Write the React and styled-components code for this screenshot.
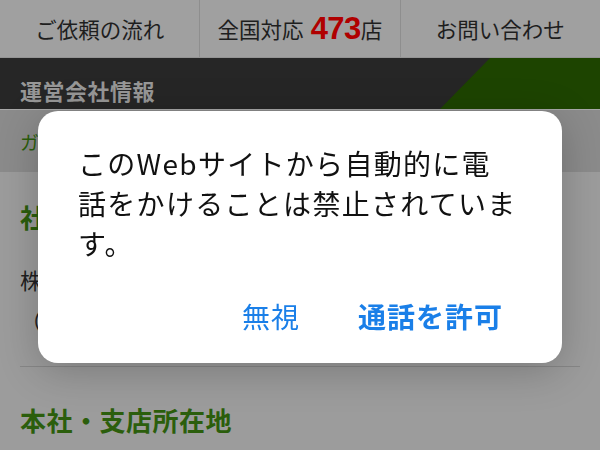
import React from "react";
import styled, { createGlobalStyle } from "styled-components";

const GlobalStyle = createGlobalStyle`
  html, body {
    margin: 0;
    padding: 0;
    background: #9c9c9c;
  }
  body {
    font-family: "Noto Sans CJK JP", "Noto Sans", sans-serif;
    width: 600px;
    height: 450px;
    overflow: hidden;
  }
`;

const Page = styled.div`
  width: 600px;
  height: 450px;
  background: #9c9c9c;
`;

const Nav = styled.nav`
  display: flex;
  height: 58px;
  background: #a0a0a0;
  border-bottom: 1px solid #939393;
  box-sizing: border-box;
`;

const NavItem = styled.a`
  flex: 1;
  display: flex;
  align-items: center;
  justify-content: center;
  font-size: 21.5px;
  color: #1e1e1e;
  text-decoration: none;
  border-left: ${props => (props.first ? "none" : "1px solid #8e8e8e")};
`;

const Count = styled.span`
  font-family: "Liberation Sans", Arial, sans-serif;
  font-weight: bold;
  font-size: 31px;
  color: #b00000;
  margin-left: 7px;
  letter-spacing: -0.5px;
`;

const TitleBar = styled.div`
  position: relative;
  height: 52px;
  box-sizing: border-box;
  padding: 16px 20px 0;
  background: #262626;
  border-bottom: 1px solid #a8a8a8;
  overflow: hidden;

  &::after {
    content: "";
    position: absolute;
    top: 0;
    right: 0;
    bottom: 0;
    width: 160px;
    background: #1d4400;
    clip-path: polygon(50px 0, 100% 0, 100% 100%, 0 100%);
  }
`;

const BarTitle = styled.h1`
  margin: 0;
  font-size: 22px;
  line-height: 32px;
  font-weight: bold;
  color: #979797;
  letter-spacing: 0.5px;
`;

const Breadcrumb = styled.div`
  height: 62px;
  display: flex;
  align-items: center;
  padding-left: 20px;
  background: #8b8b8b;
  font-size: 19px;
  color: #2b5e0c;
`;

const Section = styled.section`
  padding: 27px 20px 0;
`;

const Heading = styled.h2`
  margin: 0;
  font-size: 26px;
  line-height: 36px;
  font-weight: bold;
  color: #2b5e0c;
  letter-spacing: 0.5px;
`;

const InfoList = styled.div`
  margin-top: 24px;
  font-size: 22px;
  line-height: 40px;
  color: #1f1f1f;
`;

const Divider = styled.hr`
  margin: 27px 0 35px;
  border: none;
  border-top: 1px solid #878787;
`;

const Alert = styled.div`
  position: fixed;
  top: 111px;
  left: 38px;
  width: 524px;
  height: 252px;
  box-sizing: border-box;
  padding: 32px 40px 0;
  background: #ffffff;
  border-radius: 20px;
  box-shadow: 0 8px 40px rgba(0, 0, 0, 0.22);
`;

const Message = styled.p`
  margin: 0;
  font-size: 28px;
  line-height: 40px;
  letter-spacing: 1.3px;
  color: #111111;
  white-space: nowrap;
`;

const Actions = styled.div`
  display: flex;
  justify-content: flex-end;
  align-items: center;
  gap: 58px;
  height: 56px;
  margin-top: 25px;
  padding-right: 19px;
`;

const ActionButton = styled.button`
  border: none;
  background: none;
  padding: 0;
  font-family: inherit;
  font-size: 28px;
  letter-spacing: 1px;
  font-weight: ${props => (props.primary ? "bold" : "normal")};
  color: #1a7fe8;
  cursor: pointer;
`;

export default function App() {
  return (
    <Page>
      <GlobalStyle />
      <Nav>
        <NavItem first>ご依頼の流れ</NavItem>
        <NavItem>
          全国対応<Count>473</Count>店
        </NavItem>
        <NavItem>お問い合わせ</NavItem>
      </Nav>
      <TitleBar>
        <BarTitle>運営会社情報</BarTitle>
      </TitleBar>
      <Breadcrumb>ガス給湯器の交換 ＞ 運営会社情報</Breadcrumb>
      <Section>
        <Heading>社名</Heading>
        <InfoList>
          <div>株式会社ホームテック</div>
          <div>（HOMETECH Co., Ltd.）</div>
        </InfoList>
        <Divider />
        <Heading>本社・支店所在地</Heading>
      </Section>

      <Alert role="alertdialog">
        <Message>
          このWebサイトから自動的に電
          <br />
          話をかけることは禁止されていま
          <br />
          す。
        </Message>
        <Actions>
          <ActionButton>無視</ActionButton>
          <ActionButton primary>通話を許可</ActionButton>
        </Actions>
      </Alert>
    </Page>
  );
}
